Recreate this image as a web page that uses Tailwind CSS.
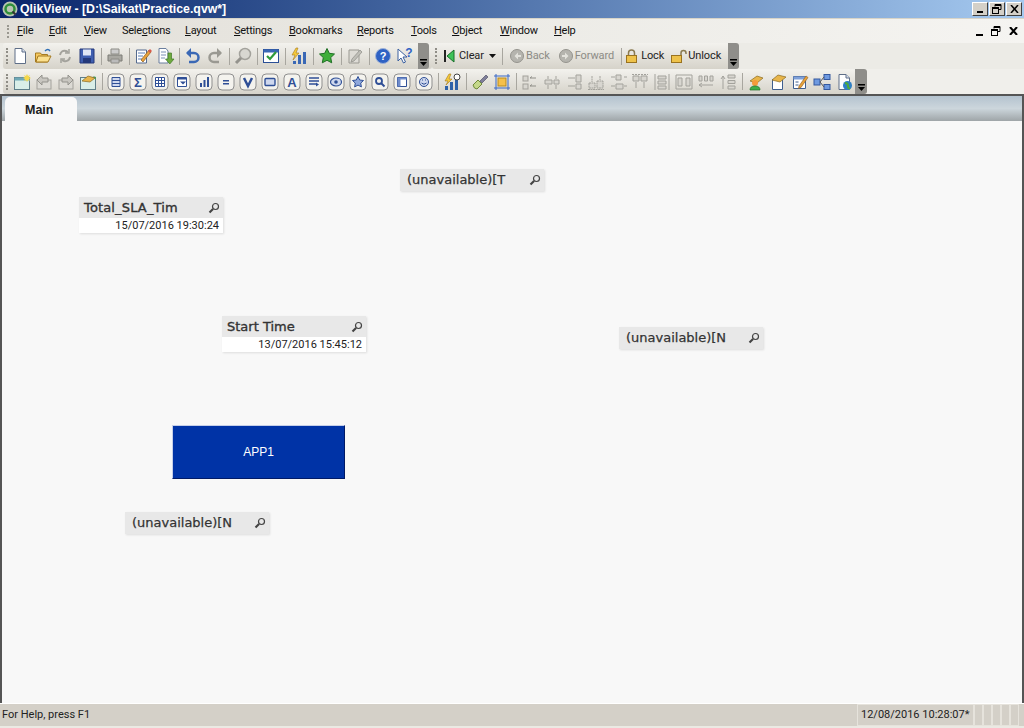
<!DOCTYPE html>
<html lang="en">
<head>
    <meta charset="UTF-8">
    <title>QlikView - [D:\Saikat\Practice.qvw*]</title>
    <script src="https://cdn.jsdelivr.net/npm/@tailwindcss/browser@4"></script>
</head>
<body class="w-[1024px] h-[728px] overflow-hidden bg-[#d4d0c8] font-['Roboto',sans-serif] text-[11px] text-[#111]">
    <!-- shared icons -->
    <svg class="hidden">
        <symbol id="frame" viewBox="0 0 18 18"><rect x="1" y="1" width="16" height="16" rx="4" fill="#f4f3ee" stroke="#8f8f8f"/></symbol>
        <symbol id="grey-box" viewBox="0 0 18 18"><g fill="#d8d6d0" stroke="#a3a19b"><rect x="2" y="3" width="5" height="5"/><rect x="2" y="11" width="5" height="5"/></g><path d="M9 5h6M9 13h6M9 5l2-1.500M9 13l2-1.500" stroke="#8f8e88" fill="none"/></symbol>
        <symbol id="page" viewBox="0 0 18 18"><path d="M4 1.500h7l3.500 3.500v11.500H4z" fill="#fff" stroke="#5f6f88"/><path d="M11 1.500V5h3.500" fill="#d8e0ee" stroke="#5f6f88"/></symbol>
        <symbol id="lens" viewBox="0 0 12 12"><circle cx="7.500" cy="4.500" r="3" fill="none" stroke="#444" stroke-width="1.200"/><path d="M5 7L1.500 10.500" stroke="#444" stroke-width="2.200"/></symbol>
    </svg>

    <!-- title bar -->
    <div class="h-[18px] flex items-center bg-gradient-to-r from-[#0a246a] to-[#a6caf0] text-white">
        <svg class="w-[16px] h-[16px] ml-[2px]" viewBox="0 0 16 16"><circle cx="8" cy="8" r="7.500" fill="#b9c4b2"/><circle cx="8" cy="8" r="4.500" fill="none" stroke="#2f8f3a" stroke-width="2.500"/><path d="M10.500 10.500l3 3" stroke="#333" stroke-width="2"/></svg>
        <span class="ml-[2px] font-['Liberation_Sans',sans-serif] font-bold text-[12.3px]">QlikView - [D:\Saikat\Practice.qvw*]</span>
        <div class="ml-auto flex gap-[1px] mr-[2px]">
            <div class="w-[16px] h-[14px] bg-[#d4d0c8] border border-t-white border-l-white border-r-[#404040] border-b-[#404040] flex items-end justify-center pb-[2px]"><div class="w-[6px] h-[2px] bg-black"></div></div>
            <div class="w-[16px] h-[14px] bg-[#d4d0c8] border border-t-white border-l-white border-r-[#404040] border-b-[#404040] flex items-center justify-center">
                <svg class="w-[10px] h-[10px]" viewBox="0 0 10 10" fill="none" stroke="#000"><path d="M3 2.500V.500h6v5H7"/><path d="M3 1.500h6"/><rect x=".500" y="3.500" width="6" height="6"/><path d="M.500 4.500h6"/></svg>
            </div>
            <div class="w-[16px] h-[14px] bg-[#d4d0c8] border border-t-white border-l-white border-r-[#404040] border-b-[#404040] flex items-center justify-center">
                <svg class="w-[9px] h-[8px]" viewBox="0 0 9 8" stroke="#000" stroke-width="1.500"><path d="M1 0l7 8M8 0L1 8"/></svg>
            </div>
        </div>
    </div>

    <!-- menu bar -->
    <div class="h-[25px] flex items-center bg-gradient-to-r from-[#e2dfd8] via-[#ecebe6] to-[#f5f4f1] border-t border-[#d8d4c8]">
        <div class="w-[2px] h-[13px] ml-[7px] border-l-2 border-dotted border-[#9a9890]"></div>
        <div class="flex ml-[8px] tracking-[-0.25px] pt-[1px]">
            <span class="w-[32px]"><u>F</u>ile</span>
            <span class="w-[35px]"><u>E</u>dit</span>
            <span class="w-[38px]"><u>V</u>iew</span>
            <span class="w-[63px]">Sele<u>c</u>tions</span>
            <span class="w-[49px]"><u>L</u>ayout</span>
            <span class="w-[55px]"><u>S</u>ettings</span>
            <span class="w-[68px]"><u>B</u>ookmarks</span>
            <span class="w-[54px]"><u>R</u>eports</span>
            <span class="w-[41px]"><u>T</u>ools</span>
            <span class="w-[48px]"><u>O</u>bject</span>
            <span class="w-[54px]"><u>W</u>indow</span>
            <span class="w-[30px]"><u>H</u>elp</span>
        </div>
        <div class="ml-auto flex items-center gap-[8px] mr-[6px]">
            <div class="w-[7px] h-[2px] bg-black mt-[8px]"></div>
            <svg class="w-[10px] h-[10px]" viewBox="0 0 10 10" fill="none" stroke="#000"><path d="M3 2.500V.500h6v5H7"/><path d="M3 1.500h6"/><rect x=".500" y="3.500" width="6" height="6"/><path d="M.500 4.500h6"/></svg>
            <svg class="w-[9px] h-[8px]" viewBox="0 0 9 8" stroke="#000" stroke-width="2"><path d="M1 0l7 8M8 0L1 8"/></svg>
        </div>
    </div>

    <!-- standard + navigation toolbars -->
    <div class="h-[26px] flex items-stretch bg-[#ecebe6]">
        <div class="flex items-center w-[429px] bg-gradient-to-b from-[#f3f2ee] to-[#d6d3ca] rounded-[3px] ml-[3px]">
            <div class="w-[2px] h-[16px] ml-[3px] mr-[1px] border-l-2 border-dotted border-[#8f8d86]"></div>
            <div class="flex items-center">
                <svg class="w-[22px] h-[18px]"><use href="#page"/></svg>
                <svg class="w-[22px] h-[18px] ml-[1px]" viewBox="0 0 18 18"><path d="M1.500 6h5l1 1.500h6V15h-12z" fill="#f5c860" stroke="#a57a20"/><path d="M2 15l2-6h13l-3 6z" fill="#fbe08e" stroke="#a57a20"/><path d="M11 4q3-3 5 0" fill="none" stroke="#2f6fb5" stroke-width="1.500"/></svg>
                <svg class="w-[22px] h-[18px]" viewBox="0 0 18 18" fill="none" stroke="#a3a29c" stroke-width="2"><path d="M4 8q1-5 6-4l2 1M14 10q-1 5-6 4l-2-1"/><path d="M13 2v4H9M5 16v-4h4" stroke-width="1.500"/></svg>
                <svg class="w-[22px] h-[18px]" viewBox="0 0 18 18"><path d="M2 2h14v14H2z" fill="#3f5fb0" stroke="#24397a"/><rect x="5" y="2.500" width="8" height="6" fill="#dfe6f5"/><rect x="5" y="11" width="8" height="5" fill="#24397a"/></svg>
            </div>
            <div class="w-[6px] flex justify-center"><div class="w-px h-[17px] bg-[#a8a69f]"></div></div>
            <svg class="w-[22px] h-[18px]" viewBox="0 0 18 18"><path d="M5 2h8v5H5z" fill="#ccc" stroke="#8d8c86"/><path d="M2 8h14v6H2z" fill="#a9a8a2" stroke="#7d7c76"/><path d="M5 12h8v4H5z" fill="#bbb" stroke="#8d8c86"/></svg>
            <div class="w-[6px] flex justify-center"><div class="w-px h-[17px] bg-[#a8a69f]"></div></div>
            <svg class="w-[22px] h-[18px]" viewBox="0 0 18 18"><path d="M2.500 3h10v13h-10z" fill="#fff" stroke="#556b8f"/><path d="M4 6h7M4 9h5M4 12h4" stroke="#5a7fb5"/><path d="M7 13l8-10 2 2-8 10z" fill="#e8a23a" stroke="#8a5a20" stroke-width=".700"/><path d="M14 4l2-2 2 2-2 2z" fill="#d85a4a"/></svg>
            <svg class="w-[22px] h-[18px]" viewBox="0 0 18 18"><path d="M3 1.500h7l2 2.500v12H3z" fill="#fff" stroke="#6b7f9f"/><path d="M5 5h5M5 8h5M5 11h4" stroke="#7a8fb5"/><path d="M12 6h3.500v6H18l-4.200 5-4.300-5H12z" fill="#6faa3f" stroke="#3f7a25" stroke-width=".700"/></svg>
            <div class="w-[6px] flex justify-center"><div class="w-px h-[17px] bg-[#a8a69f]"></div></div>
            <svg class="w-[22px] h-[18px]" viewBox="0 0 18 18" fill="none"><path d="M5 15h5a4.500 4.500 0 0 0 0-9H3" stroke="#3a68b5" stroke-width="2.500"/><path d="M7 1L2 6l5 5z" fill="#3a68b5"/></svg>
            <svg class="w-[22px] h-[18px]" viewBox="0 0 18 18" fill="none"><path d="M13 15H8a4.500 4.500 0 0 1 0-9h7" stroke="#9a9992" stroke-width="2.500"/><path d="M11 1l5 5-5 5z" fill="#9a9992"/></svg>
            <div class="w-[6px] flex justify-center"><div class="w-px h-[17px] bg-[#a8a69f]"></div></div>
            <svg class="w-[22px] h-[18px]" viewBox="0 0 18 18" fill="none"><circle cx="11" cy="7" r="5.500" fill="#d8d7d1" stroke="#a3a29c" stroke-width="1.500"/><path d="M7 11l-5 5" stroke="#94938d" stroke-width="3"/></svg>
            <div class="w-[6px] flex justify-center"><div class="w-px h-[17px] bg-[#a8a69f]"></div></div>
            <svg class="w-[22px] h-[18px]" viewBox="0 0 18 18"><rect x="1.500" y="2.500" width="15" height="13" fill="#fff" stroke="#2a4f96"/><rect x="1.500" y="2.500" width="15" height="3" fill="#3a68b5"/><path d="M5 9l3 3 6-7" fill="none" stroke="#2f9a3a" stroke-width="2.200"/></svg>
            <div class="w-[6px] flex justify-center"><div class="w-px h-[17px] bg-[#a8a69f]"></div></div>
            <svg class="w-[22px] h-[18px]" viewBox="0 0 18 18"><path d="M6 1L2 8h3l-2 5 6-7H6l2-5z" fill="#f5c93a" stroke="#a57a20" stroke-width=".600"/><path d="M3 14h3v3H3zM8 8h3v9H8zM13 5h3v12h-3z" fill="#3a68b5"/></svg>
            <div class="w-[6px] flex justify-center"><div class="w-px h-[17px] bg-[#a8a69f]"></div></div>
            <svg class="w-[22px] h-[18px]" viewBox="0 0 18 18"><path d="M9 1.500l2.300 4.800 5.200.7-3.800 3.600 1 5.200L9 13.300l-4.700 2.500 1-5.200L1.500 7l5.200-.7z" fill="#3fae3a" stroke="#1f6f25"/></svg>
            <div class="w-[6px] flex justify-center"><div class="w-px h-[17px] bg-[#a8a69f]"></div></div>
            <svg class="w-[22px] h-[18px]" viewBox="0 0 18 18"><path d="M3 3h10v13H3z" fill="#dedcd6" stroke="#9a9992"/><path d="M6 12l8-9 2 2-8 9-3 1z" fill="#c0bfb8" stroke="#8d8c86" stroke-width=".700"/></svg>
            <div class="w-[6px] flex justify-center"><div class="w-px h-[17px] bg-[#a8a69f]"></div></div>
            <svg class="w-[22px] h-[18px]" viewBox="0 0 18 18"><circle cx="9" cy="9" r="7.500" fill="#2f62c4" stroke="#9fb3d8"/><text x="9" y="13" text-anchor="middle" font-size="11" font-weight="700" fill="#fff" font-family="Liberation Sans">?</text></svg>
            <svg class="w-[22px] h-[18px]" viewBox="0 0 18 18"><path d="M2 2v12l3-3 2.500 5 2-1-2.500-5h4z" fill="#fff" stroke="#3a5f9f"/><text x="13" y="10" text-anchor="middle" font-size="12" font-weight="700" fill="#2f62c4" font-family="Liberation Sans">?</text></svg>
        </div>
        <div class="w-[11px] bg-[#8f8e8a] rounded-r-[3px] flex items-end justify-center pb-[3px] -ml-[14px]">
            <svg class="w-[7px] h-[7px]" viewBox="0 0 7 7"><path d="M0 0h7v1.500H0z" fill="#000"/><path d="M0 3h7L3.500 7z" fill="#000"/></svg>
        </div>
        <div class="flex items-center w-[307px] ml-[3px] bg-gradient-to-b from-[#f3f2ee] to-[#d6d3ca] rounded-[3px] text-[#222] tracking-[-0.1px]">
            <div class="w-[2px] h-[16px] ml-[3px] border-l-2 border-dotted border-[#8f8d86]"></div>
            <svg class="w-[14px] h-[16px] ml-[5px]" viewBox="0 0 14 16"><path d="M2 2h2v12H2z" fill="#222"/><path d="M12 2v12L5 8z" fill="#3fc25a" stroke="#186f2a"/></svg>
            <span class="ml-[3px]">Clear</span>
            <svg class="w-[7px] h-[4px] ml-[5px]" viewBox="0 0 7 4"><path d="M0 0h7L3.500 4z" fill="#111"/></svg>
            <div class="w-px h-[17px] bg-[#a8a69f] ml-[6px]"></div>
            <svg class="w-[14px] h-[14px] ml-[7px]" viewBox="0 0 14 14"><circle cx="7" cy="7" r="6.500" fill="#b5b4ae" stroke="#94938d"/><path d="M8 3.500L4.500 7 8 10.500zM8 6h3v2H8z" fill="#e3e2dc"/></svg>
            <span class="ml-[2px] text-[#8d8c86]">Back</span>
            <svg class="w-[14px] h-[14px] ml-[9px]" viewBox="0 0 14 14"><circle cx="7" cy="7" r="6.500" fill="#b5b4ae" stroke="#94938d"/><path d="M6 3.500L9.500 7 6 10.500zM6 6H3v2h3z" fill="#e3e2dc"/></svg>
            <span class="ml-[2px] text-[#8d8c86]">Forward</span>
            <div class="w-px h-[17px] bg-[#a8a69f] ml-[7px]"></div>
            <svg class="w-[13px] h-[14px] ml-[3px]" viewBox="0 0 13 14"><path d="M3.500 7V4a3 3 0 0 1 6 0v3" fill="none" stroke="#8a7a50" stroke-width="1.500"/><rect x="1.500" y="6.500" width="10" height="7" fill="#eec24a" stroke="#9a7320"/></svg>
            <span class="ml-[3px]">Lock</span>
            <svg class="w-[16px] h-[14px] ml-[7px]" viewBox="0 0 16 14"><path d="M10 7V4a2.500 2.500 0 0 1 5 0v1" fill="none" stroke="#8a7a50" stroke-width="1.500"/><rect x=".500" y="6.500" width="10" height="7" fill="#eec24a" stroke="#9a7320"/></svg>
            <span class="ml-[1px]">Unlock</span>
        </div>
        <div class="w-[11px] bg-[#8f8e8a] rounded-r-[3px] flex items-end justify-center pb-[3px] -ml-[11px]">
            <svg class="w-[7px] h-[7px]" viewBox="0 0 7 7"><path d="M0 0h7v1.500H0z" fill="#000"/><path d="M0 3h7L3.500 7z" fill="#000"/></svg>
        </div>
    </div>

    <!-- design toolbar -->
    <div class="h-[25px] flex items-stretch bg-[#f0efeb]">
        <div class="flex items-center w-[864px] ml-[3px] bg-gradient-to-b from-[#f3f2ee] to-[#d6d3ca] rounded-[3px]">
            <div class="w-[2px] h-[16px] ml-[3px] mr-[3px] border-l-2 border-dotted border-[#8f8d86]"></div>
            <svg class="w-[22px] h-[18px]" viewBox="0 0 18 18"><rect x="1.500" y="4.500" width="15" height="12" fill="#d9eee8" stroke="#5f7f8a"/><rect x="1.500" y="4.500" width="15" height="3" fill="#6fa8b5"/><path d="M14 1l1 2 2-1-1 2 2 1-2 1 1 2-2-1-1 2-1-2-2 1 1-2-2-1 2-1-1-2 2 1z" fill="#f5d84a"/></svg>
            <svg class="w-[22px] h-[18px]" viewBox="0 0 18 18"><rect x="2" y="7" width="14" height="9" fill="#dcdad4" stroke="#a3a29c"/><path d="M2 7l5-5v3h6v4H7v3z" fill="#c8c6c0" stroke="#94938d"/></svg>
            <svg class="w-[22px] h-[18px]" viewBox="0 0 18 18"><rect x="2" y="7" width="14" height="9" fill="#dcdad4" stroke="#a3a29c"/><path d="M16 7l-5-5v3H5v4h6v3z" fill="#c8c6c0" stroke="#94938d"/></svg>
            <svg class="w-[22px] h-[18px]" viewBox="0 0 18 18"><rect x="1.500" y="4.500" width="15" height="12" fill="#d9eee8" stroke="#5f7f8a"/><path d="M3 8l6-5 7 2-5 4z" fill="#e8b54a" stroke="#8a6a20" stroke-width=".700"/><path d="M14 3l3 1v3z" fill="#4f9a5a"/></svg>
            <div class="w-[6px] flex justify-center"><div class="w-px h-[17px] bg-[#a8a69f]"></div></div>
            <svg class="w-[22px] h-[18px]" viewBox="0 0 18 18"><use href="#frame"/><path d="M5 4.500h8v9H5zM5 7.500h8M5 10.500h8" fill="#cfd8ee" stroke="#2f4f96"/></svg>
            <svg class="w-[22px] h-[18px]" viewBox="0 0 18 18"><use href="#frame"/><text x="9" y="13.500" text-anchor="middle" font-size="13" font-weight="700" fill="#2f4f96" font-family="Liberation Sans">Σ</text></svg>
            <svg class="w-[22px] h-[18px]" viewBox="0 0 18 18"><use href="#frame"/><path d="M4.500 4.500h9v9h-9zM7.500 4.500v9M10.500 4.500v9M4.500 7.500h9M4.500 10.500h9" fill="#fff" stroke="#2f4f96"/></svg>
            <svg class="w-[22px] h-[18px]" viewBox="0 0 18 18"><use href="#frame"/><path d="M4.500 4.500h9v9h-9z" fill="#fff" stroke="#2f4f96"/><path d="M4.500 4.500h9v2h-9z" fill="#2f4f96"/><path d="M7 8.500h6l-3 3z" fill="#2f4f96"/></svg>
            <svg class="w-[22px] h-[18px]" viewBox="0 0 18 18"><use href="#frame"/><path d="M5 10h2v4H5zM8.500 7h2v7h-2zM12 4h2v10h-2z" fill="#2f4f96"/></svg>
            <svg class="w-[22px] h-[18px]" viewBox="0 0 18 18"><use href="#frame"/><path d="M6 7h6v1.500H6zM6 10h6v1.500H6z" fill="#2f4f96"/></svg>
            <svg class="w-[22px] h-[18px]" viewBox="0 0 18 18"><use href="#frame"/><path d="M5 5l4 8 4-8" fill="none" stroke="#2f4f96" stroke-width="2.500"/></svg>
            <svg class="w-[22px] h-[18px]" viewBox="0 0 18 18"><use href="#frame"/><rect x="4" y="5.500" width="10" height="7" rx="1" fill="#cfd8ee" stroke="#2f4f96" stroke-width="1.400"/></svg>
            <svg class="w-[22px] h-[18px]" viewBox="0 0 18 18"><use href="#frame"/><text x="9" y="14" text-anchor="middle" font-size="13" font-weight="700" fill="#2f4f96" font-family="Liberation Sans">A</text></svg>
            <svg class="w-[22px] h-[18px]" viewBox="0 0 18 18"><use href="#frame"/><path d="M4 5h10M4 8h10M4 11h7" stroke="#2f4f96" stroke-width="1.500"/><path d="M11 9.500l3 2-3 2z" fill="#2f4f96"/></svg>
            <svg class="w-[22px] h-[18px]" viewBox="0 0 18 18"><use href="#frame"/><ellipse cx="9" cy="9" rx="5.500" ry="4" fill="#cfd8ee" stroke="#2f4f96" stroke-width="1.200"/><circle cx="9" cy="9" r="1.800" fill="#2f4f96"/></svg>
            <svg class="w-[22px] h-[18px]" viewBox="0 0 18 18"><use href="#frame"/><path d="M9 3.500l1.700 3.500 3.800.5-2.800 2.600.7 3.800L9 12.100l-3.400 1.800.7-3.800L3.500 7.500l3.800-.5z" fill="#8fa8dc" stroke="#2f4f96"/></svg>
            <svg class="w-[22px] h-[18px]" viewBox="0 0 18 18"><use href="#frame"/><circle cx="8" cy="8" r="3" fill="none" stroke="#2f4f96" stroke-width="1.800"/><path d="M10.500 10.500l3 3" stroke="#2f4f96" stroke-width="2"/></svg>
            <svg class="w-[22px] h-[18px]" viewBox="0 0 18 18"><use href="#frame"/><path d="M4.500 4.500h9v9h-9z" fill="#fff" stroke="#2f4f96"/><path d="M4.500 4.500h9v2h-9zM4.500 6.500h3v7h-3z" fill="#6f8ccb"/></svg>
            <svg class="w-[22px] h-[18px]" viewBox="0 0 18 18"><use href="#frame"/><circle cx="9" cy="9" r="4.500" fill="#cfd8ee" stroke="#2f4f96"/><path d="M6.500 10q2.500 2.500 5 0M7 7h1M10 7h1" fill="none" stroke="#2f4f96"/></svg>
            <div class="w-[6px] flex justify-center"><div class="w-px h-[17px] bg-[#a8a69f]"></div></div>
            <svg class="w-[22px] h-[18px]" viewBox="0 0 18 18"><path d="M6 1L2 8h3l-2 4 6-6H6l2-5z" fill="#f5c93a" stroke="#a57a20" stroke-width=".600"/><path d="M2 13h3v4H2zM7 9h3v8H7zM12 7h3v10h-3z" fill="#2f62a8"/><circle cx="14" cy="4" r="3" fill="#fff" stroke="#444"/></svg>
            <div class="w-[6px] flex justify-center"><div class="w-px h-[17px] bg-[#a8a69f]"></div></div>
            <svg class="w-[22px] h-[18px]" viewBox="0 0 18 18"><path d="M2 12l5-5 4 4-5 5q-3 0-4-4z" fill="#c5d88a" stroke="#6f8a3a"/><path d="M9 8l6-6 2 2-6 6z" fill="#7f7f9a" stroke="#55556a" stroke-width=".700"/></svg>
            <svg class="w-[22px] h-[18px]" viewBox="0 0 18 18"><rect x="5" y="5" width="8" height="8" fill="#f5c04a" stroke="#b58a20"/><path d="M3 1v16M15 1v16M1 3h16M1 15h16" stroke="#3a68c5"/></svg>
            <div class="w-[6px] flex justify-center"><div class="w-px h-[17px] bg-[#a8a69f]"></div></div>
            <svg class="w-[22px] h-[18px]"><use href="#grey-box"/></svg>
            <svg class="w-[22px] h-[18px]" viewBox="0 0 18 18" fill="#d8d6d0" stroke="#a3a29c"><path d="M2 7h7v4H2zM11 7h5v4h-5zM5 3v3M13 3v3M5 12v4M13 12v4"/></svg>
            <svg class="w-[22px] h-[18px]" viewBox="0 0 18 18" fill="#d8d6d0" stroke="#a3a29c"><path d="M11 2h5v7h-5zM11 11h5v5h-5zM3 5h7M3 13h7"/></svg>
            <svg class="w-[22px] h-[18px]" viewBox="0 0 18 18" fill="#d8d6d0" stroke="#a3a29c"><path d="M2 10h6v5H2zM10 8h6v7h-6zM1 16.500h16M5 3v6M13 3v4" stroke-dasharray="2 .500"/></svg>
            <svg class="w-[22px] h-[18px]" viewBox="0 0 18 18" fill="#d8d6d0" stroke="#a3a29c"><path d="M7 2h5v5H7zM7 11h7v5H7zM2 4h4M2 13h4M15 4h3M15 13h3"/></svg>
            <svg class="w-[22px] h-[18px]" viewBox="0 0 18 18" fill="#d8d6d0" stroke="#a3a29c"><path d="M1 1.500h16" stroke-dasharray="2 1"/><path d="M2 3h6v5H2zM10 3h6v5h-6zM5 9v6M13 9v6"/></svg>
            <svg class="w-[22px] h-[18px]" viewBox="0 0 18 18" fill="#d8d6d0" stroke="#a3a29c"><path d="M2 1v16M16 1v16M5 3h8v3H5zM5 8h8v3H5zM5 13h8v3H5z"/></svg>
            <svg class="w-[22px] h-[18px]" viewBox="0 0 18 18" fill="#d8d6d0" stroke="#a3a29c"><path d="M1 2v14M17 2v14M3 5h4v8H3zM11 5h4v8h-4zM1 2h16M1 16h16"/></svg>
            <svg class="w-[22px] h-[18px]" viewBox="0 0 18 18" fill="#d8d6d0" stroke="#a3a29c"><path d="M2 3h3v5H2zM7.500 3h3v5h-3zM13 3h3v5h-3zM2 12h14M2 12l3-2M2 12l3 2"/></svg>
            <svg class="w-[22px] h-[18px]" viewBox="0 0 18 18" fill="#d8d6d0" stroke="#a3a29c"><path d="M9 2h7v3H9zM9 7.500h7v3H9zM9 13h7v3H9zM4 16V3M4 3L2 6M4 3l2 3"/></svg>
            <div class="w-[6px] flex justify-center"><div class="w-px h-[17px] bg-[#a8a69f]"></div></div>
            <svg class="w-[22px] h-[18px]" viewBox="0 0 18 18"><path d="M3 8l7-5 6 2-6 5z" fill="#e8b54a" stroke="#8a6a20" stroke-width=".700"/><circle cx="8" cy="10" r="3" fill="#f59a3a"/><path d="M3 17q0-4 5-4t5 4z" fill="#3fae4a" stroke="#1f6f25" stroke-width=".700"/></svg>
            <svg class="w-[22px] h-[18px]" viewBox="0 0 18 18"><path d="M3.500 6.500h10v10h-10z" fill="#fff" stroke="#3f5f8f"/><path d="M3 7l6-5 8 2-6 5z" fill="#e8b54a" stroke="#8a6a20" stroke-width=".700"/></svg>
            <svg class="w-[22px] h-[18px]" viewBox="0 0 18 18"><path d="M2.500 3.500h12v12h-12z" fill="#fff" stroke="#3f5f8f"/><path d="M2.500 3.500h12v3h-12z" fill="#7fa0d8"/><path d="M4.500 9h3M4.500 12h3" stroke="#3f5f8f"/><path d="M8 13l7-10 2 1.500-7 10-2.500 1z" fill="#e8a23a" stroke="#8a5a20" stroke-width=".600"/></svg>
            <svg class="w-[22px] h-[18px]" viewBox="0 0 18 18"><g fill="#6f9ae0" stroke="#34589f"><rect x="1" y="6" width="6" height="6"/><rect x="11" y="1.500" width="6" height="5"/><rect x="11" y="11.500" width="6" height="5"/></g><path d="M7 9l4-5M7 9l4 5" stroke="#555" fill="none"/></svg>
            <svg class="w-[22px] h-[18px]" viewBox="0 0 18 18"><use href="#page"/><circle cx="12.500" cy="12.500" r="4.500" fill="#2f7fc5"/><path d="M10 10q3 0 3 3t2 2" fill="none" stroke="#4faa3a" stroke-width="2"/></svg>
        </div>
        <div class="w-[12px] bg-[#8f8e8a] rounded-r-[3px] flex items-end justify-center pb-[3px] -ml-[12px]">
            <svg class="w-[7px] h-[7px]" viewBox="0 0 7 7"><path d="M0 0h7v1.500H0z" fill="#000"/><path d="M0 3h7L3.500 7z" fill="#000"/></svg>
        </div>
    </div>

    <!-- sheet area -->
    <div class="h-[609px] border-t-2 border-[#555] border-x-2 border-x-[#555] flex flex-col">
        <div class="h-[25px] shrink-0 flex items-end bg-gradient-to-b from-[#b4c3cf] via-[#ccd6dc] to-[#9fa5a8]">
            <div class="w-[72px] h-[24px] ml-[3px] pl-[20px] pt-[2px] bg-[#f8f8f8] rounded-t-[5px] flex items-center font-['Liberation_Sans',sans-serif] font-bold text-[12.5px] text-[#222]">Main</div>
        </div>

        <!-- free canvas of sheet objects -->
        <div class="relative flex-1 bg-[#f8f8f8] text-[#333]">
            <div class="absolute left-[398px] top-[48px] w-[144px] h-[22px] bg-[#e8e8e8] flex items-center justify-between pl-[7px] pr-[3px] shadow-[1px_1px_2px_#ddd] font-['DejaVu_Sans',sans-serif] text-[13px] [-webkit-text-stroke:0.25px_#333]">
                <span>(unavailable)[T</span>
                <svg class="w-[12px] h-[12px]"><use href="#lens"/></svg>
            </div>
            <div class="absolute left-[77px] top-[76px] w-[144px] shadow-[1px_1px_2px_#ddd]">
                <div class="h-[21px] bg-[#e8e8e8] flex items-center justify-between pl-[5px] pr-[3px] font-['DejaVu_Sans',sans-serif] text-[13px] tracking-[.15px] [-webkit-text-stroke:0.35px_#333]">
                    <span>Total_SLA_Tim</span>
                    <svg class="w-[12px] h-[12px]"><use href="#lens"/></svg>
                </div>
                <div class="h-[15px] bg-white text-right pr-[4px] leading-[15px] text-[#222] text-[11px]">15/07/2016 19:30:24</div>
            </div>
            <div class="absolute left-[220px] top-[195px] w-[144px] shadow-[1px_1px_2px_#ddd]">
                <div class="h-[21px] bg-[#e8e8e8] flex items-center justify-between pl-[5px] pr-[3px] font-['DejaVu_Sans',sans-serif] text-[13px] [-webkit-text-stroke:0.35px_#333]">
                    <span>Start Time</span>
                    <svg class="w-[12px] h-[12px]"><use href="#lens"/></svg>
                </div>
                <div class="h-[15px] bg-white text-right pr-[4px] leading-[15px] text-[#222] text-[11px]">13/07/2016 15:45:12</div>
            </div>
            <div class="absolute left-[617px] top-[206px] w-[144px] h-[22px] bg-[#e8e8e8] flex items-center justify-between pl-[7px] pr-[3px] shadow-[1px_1px_2px_#ddd] font-['DejaVu_Sans',sans-serif] text-[13px] [-webkit-text-stroke:0.25px_#333]">
                <span>(unavailable)[N</span>
                <svg class="w-[12px] h-[12px]"><use href="#lens"/></svg>
            </div>
            <div class="absolute left-[170px] top-[304px] w-[173px] h-[54px] bg-[#0033a6] border border-t-[#c6cfe8] border-l-[#c6cfe8] border-r-[#001a66] border-b-[#001a66] flex items-center justify-center text-white font-['Liberation_Sans',sans-serif] text-[12px]">APP1</div>
            <div class="absolute left-[123px] top-[391px] w-[144px] h-[22px] bg-[#e8e8e8] flex items-center justify-between pl-[7px] pr-[3px] shadow-[1px_1px_2px_#ddd] font-['DejaVu_Sans',sans-serif] text-[13px] [-webkit-text-stroke:0.25px_#333]">
                <span>(unavailable)[N</span>
                <svg class="w-[12px] h-[12px]"><use href="#lens"/></svg>
            </div>
        </div>
    </div>

    <!-- status bar -->
    <div class="h-[25px] flex items-stretch bg-[#d4d0c8] border-t border-white border-b-2 border-b-[#ebe9e3] text-[#222] text-[11px]">
        <div class="pl-[2px] flex items-center">For Help, press F1</div>
        <div class="ml-auto w-[117px] border border-[#e6e3dc] flex items-center pl-[3px] whitespace-nowrap">12/08/2016 10:28:07*</div>
        <div class="w-[9px] border border-[#e6e3dc]"></div>
        <div class="w-[9px] border border-[#e6e3dc]"></div>
        <div class="w-[9px] border border-[#e6e3dc]"></div>
        <div class="w-[9px] border border-[#e6e3dc]"></div>
        <div class="w-[9px] border border-[#e6e3dc]"></div>
        <div class="w-[5px]"></div>
    </div>
</body>
</html>
